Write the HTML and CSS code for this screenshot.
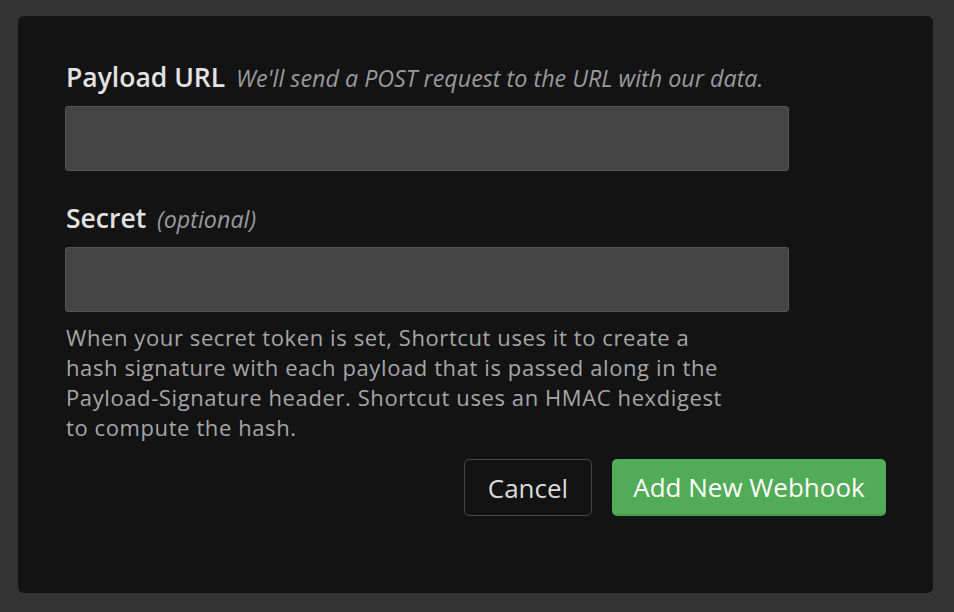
FILE: index.html
```html
<!DOCTYPE html>
<html>
<head>
<meta charset="utf-8">
<link rel="stylesheet" href="styles.css">
</head>
<body>
<div class="card">
  <form class="form">
    <div class="field">
      <label class="label">Payload URL <span class="hint">We'll send a POST request to the URL with our data.</span></label>
      <div class="input"></div>
    </div>
    <div class="field">
      <label class="label">Secret <span class="hint">(optional)</span></label>
      <div class="input"></div>
      <p class="help">When your secret token is set, Shortcut uses it to create a hash signature with each payload that is passed along in the Payload-Signature header. Shortcut uses an HMAC hexdigest to compute the hash.</p>
    </div>
    <div class="actions">
      <button type="button" class="btn btn-cancel">Cancel</button>
      <button type="button" class="btn btn-primary">Add New Webhook</button>
    </div>
  </form>
</div>
</body>
</html>
```

FILE: styles.css
```css
* { box-sizing: border-box; }
html, body { margin: 0; height: 100%; }
body {
  background: #333333;
  padding: 16px 21px 19px 18px;
  font-family: "Open Sans", "Noto Sans", sans-serif;
}
.card {
  background: #131313;
  border-radius: 6px;
  height: 577px;
  padding: 44px 47px 0 47px;
}
.form { display: flex; flex-direction: column; }
.field { display: flex; flex-direction: column; }
.field + .field { margin-top: 30px; }
.label {
  font-size: 26.5px;
  font-weight: 600;
  color: #e2e2e2;
  line-height: 34px;
  padding-left: 1px;
  margin-bottom: 11px;
}
.hint {
  font-size: 23.3px;
  font-weight: 400;
  font-style: italic;
  color: #9a9a9a;
  margin-left: 4px;
}
.input {
  width: 724px;
  height: 65px;
  background: #444444;
  border: 1px solid #555555;
  border-radius: 3px;
}
.help {
  margin: 10px 0 0 1px;
  width: 674px;
  font-size: 22px;
  line-height: 30px;
  letter-spacing: 0.6px;
  color: #a6a6a6;
}
.actions {
  display: flex;
  justify-content: flex-end;
  gap: 20px;
  margin-top: 17px;
  width: 821px;
}
.btn {
  font-family: inherit;
  font-size: 26px;
  font-weight: 400;
  height: 57px;
  border-radius: 5px;
  padding: 0;
  cursor: pointer;
}
.btn-cancel {
  background: transparent;
  border: 1px solid #484848;
  color: #dcdcdc;
  width: 128px;
}
.btn-primary {
  background: #52ab56;
  border: none;
  border-bottom: 2px solid #479a4b;
  color: #ffffff;
  width: 274px;
}
```
